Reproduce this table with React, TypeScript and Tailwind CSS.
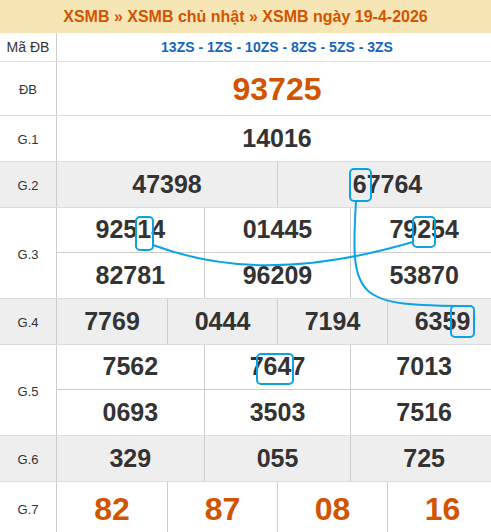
import React from 'react'

const font = { fontFamily: '"Liberation Sans", Arial, sans-serif' }

type Row = {
  label: string
  lines: string[][]
  gray?: boolean
  tall?: boolean
  red?: boolean
}

const rows: Row[] = [
  { label: 'ĐB', lines: [['93725']], tall: true, red: true },
  { label: 'G.1', lines: [['14016']] },
  { label: 'G.2', lines: [['47398', '67764']], gray: true },
  { label: 'G.3', lines: [['92514', '01445', '79254'], ['82781', '96209', '53870']] },
  { label: 'G.4', lines: [['7769', '0444', '7194', '6359']], gray: true },
  { label: 'G.5', lines: [['7562', '7647', '7013'], ['0693', '3503', '7516']] },
  { label: 'G.6', lines: [['329', '055', '725']], gray: true },
  { label: 'G.7', lines: [['82', '87', '08', '16']], tall: true, red: true },
]

const gridCols: Record<number, string> = {
  1: 'grid-cols-1',
  2: 'grid-cols-2',
  3: 'grid-cols-3',
  4: 'grid-cols-4',
}

function PrizeRow({ row, last }: { row: Row; last: boolean }) {
  const bg = row.gray ? 'bg-[#eeeeee]' : 'bg-white'
  return (
    <div className={`flex ${bg} ${last ? '' : 'border-b border-[#dcdcdc]'}`}>
      <div className="w-[57px] shrink-0 border-r border-[#cccccc] flex items-center justify-center pt-[3px] text-[13px] text-[#333]">
        {row.label}
      </div>
      <div className="flex-1 flex flex-col">
        {row.lines.map((line, i) => (
          <div
            key={i}
            className={`grid ${gridCols[line.length]} ${row.tall ? 'h-[53px]' : 'h-[45px]'} ${i < row.lines.length - 1 ? 'border-b border-[#cccccc]' : ''}`}
          >
            {line.map((n, j) => (
              <div
                key={j}
                className={`flex items-center justify-center font-bold ${j > 0 ? 'border-l border-[#cccccc]' : ''} ${row.red ? 'text-[#d35400] text-[32px]' : 'text-[#333] text-[25px]'}`}
              >
                {n}
              </div>
            ))}
          </div>
        ))}
      </div>
    </div>
  )
}

export default function App() {
  return (
    <div className="relative w-[491px] h-[532px] overflow-hidden bg-white" style={font}>
      <div className="h-[33px] bg-[#f6e6b6] flex items-center justify-center text-[16px] font-bold text-[#d35400]">
        XSMB » XSMB chủ nhật » XSMB ngày 19-4-2026
      </div>

      <div className="w-[497px]">
        <div className="flex h-[29px] border-b border-[#dcdcdc]">
          <div className="w-[57px] shrink-0 border-r border-[#cccccc] flex items-center justify-center pt-[1px] text-[14px] text-[#333]">
            Mã ĐB
          </div>
          <div className="flex-1 flex items-center justify-center text-[14px] font-bold text-[#1565c0]">
            13ZS - 1ZS - 10ZS - 8ZS - 5ZS - 3ZS
          </div>
        </div>
        {rows.map((r, i) => (
          <PrizeRow key={r.label} row={r} last={i === rows.length - 1} />
        ))}
      </div>

      {/* annotation overlay */}
      <svg className="absolute left-0 top-0 pointer-events-none" width="491" height="532" fill="none" stroke="#0aa3e6" strokeWidth="2">
        <rect x="136" y="217" width="17" height="33" rx="4" />
        <rect x="413" y="217" width="22" height="30" rx="4" />
        <rect x="350" y="169" width="21" height="32" rx="4" />
        <rect x="451" y="306" width="23" height="31" rx="4" />
        <rect x="257" y="354" width="36" height="30" rx="4" />
        <path d="M153 245 C220 270 300 275 413 242" />
        <path d="M356 201 C350 300 355 306 472 306" />
      </svg>
    </div>
  )
}
